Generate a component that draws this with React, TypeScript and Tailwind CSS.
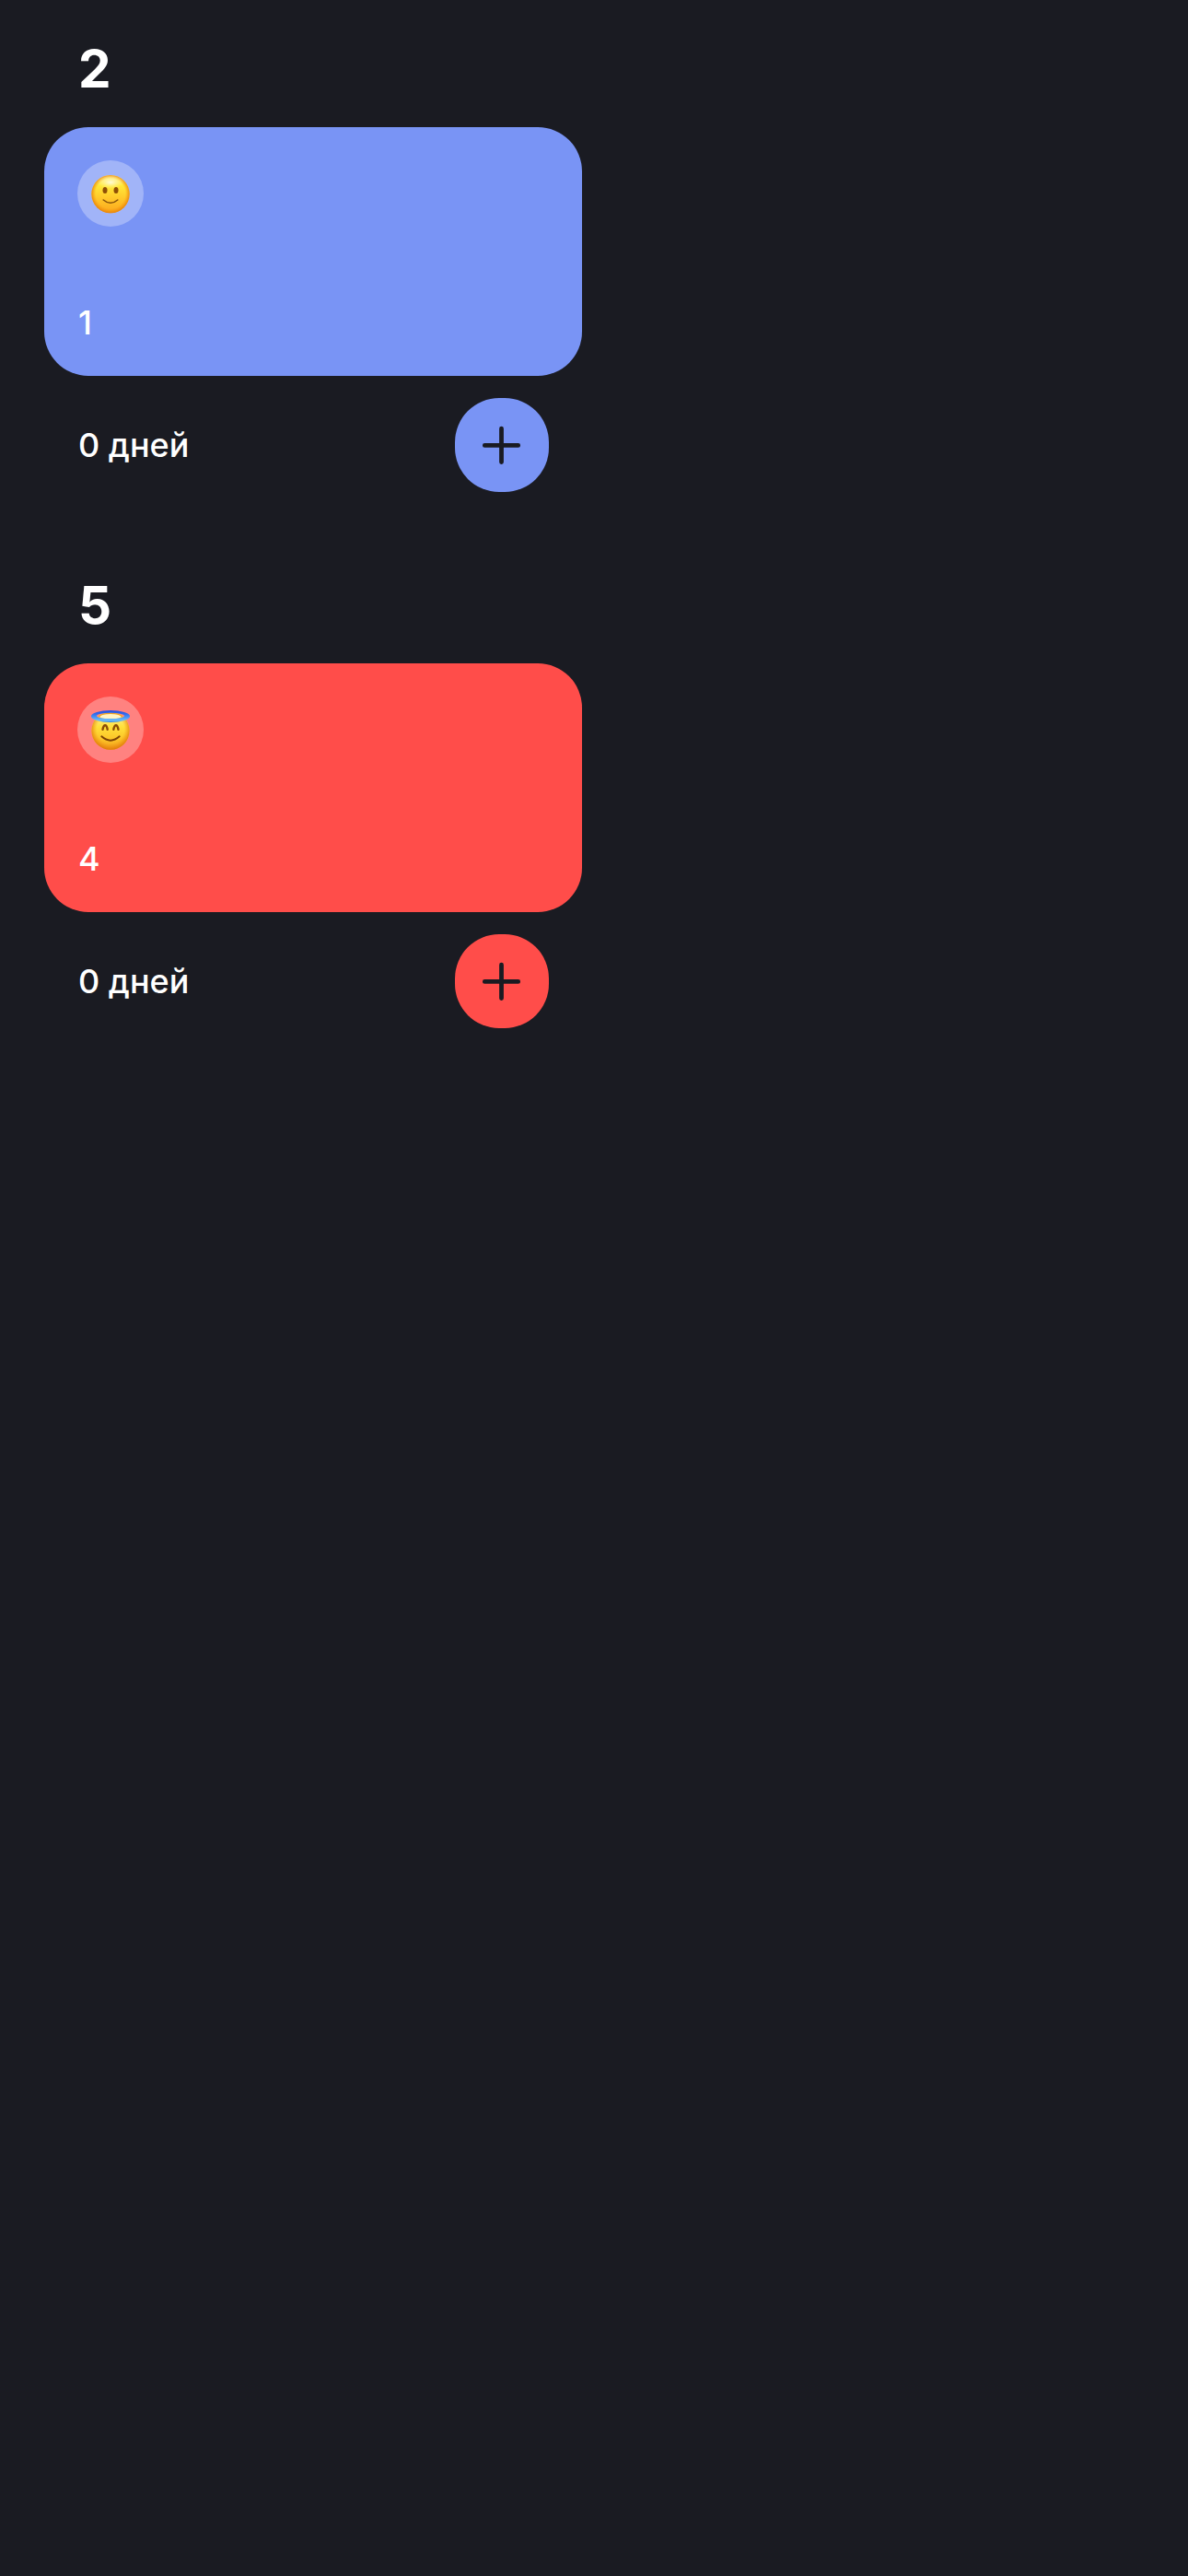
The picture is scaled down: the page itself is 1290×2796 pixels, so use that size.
function SmileFace() {
  return (
    <svg viewBox="0 0 80 80" className="size-full" aria-hidden="true">
      <defs>
        <linearGradient id="smile-base" x1="0" y1="0" x2="0" y2="1">
          <stop offset="0" stopColor="#fff3a6" />
          <stop offset="0.28" stopColor="#ffe838" />
          <stop offset="0.6" stopColor="#ffc92b" />
          <stop offset="1" stopColor="#fba61c" />
        </linearGradient>
        <radialGradient id="smile-edge" cx="0.5" cy="0.49" r="0.51">
          <stop offset="0.76" stopColor="#f59a10" stopOpacity="0" />
          <stop offset="1" stopColor="#e88208" stopOpacity="0.95" />
        </radialGradient>
        <radialGradient id="smile-shine" cx="0.5" cy="0.5" r="0.5">
          <stop offset="0" stopColor="#fffdf0" stopOpacity="0.85" />
          <stop offset="1" stopColor="#fff6a0" stopOpacity="0" />
        </radialGradient>
      </defs>
      <circle cx="40" cy="40.6" r="20.6" fill="url(#smile-base)" />
      <circle cx="40" cy="40.6" r="20.6" fill="url(#smile-edge)" />
      <ellipse cx="40" cy="28" rx="14" ry="7" fill="url(#smile-shine)" />
      <ellipse cx="34" cy="36.4" rx="2.5" ry="3.5" fill="#8e4f06" />
      <ellipse cx="46" cy="36.4" rx="2.5" ry="3.5" fill="#8e4f06" />
      <path d="M32.2 47 Q40 53.6 47.8 47" fill="none" stroke="#85510a" strokeWidth="1.5" strokeLinecap="round" />
    </svg>
  );
}

function HaloFace() {
  return (
    <svg viewBox="0 0 80 80" className="size-full" aria-hidden="true">
      <defs>
        <linearGradient id="halo-base" x1="0" y1="0" x2="0" y2="1">
          <stop offset="0" stopColor="#fff0a8" />
          <stop offset="0.4" stopColor="#ffe03a" />
          <stop offset="0.7" stopColor="#fcc629" />
          <stop offset="1" stopColor="#f3a01c" />
        </linearGradient>
        <radialGradient id="halo-edge" cx="0.5" cy="0.47" r="0.53">
          <stop offset="0.68" stopColor="#f09010" stopOpacity="0" />
          <stop offset="1" stopColor="#df7808" stopOpacity="0.9" />
        </radialGradient>
        <linearGradient id="halo-ring" x1="0" y1="0" x2="0" y2="1">
          <stop offset="0" stopColor="#2350e0" />
          <stop offset="0.22" stopColor="#2c62ea" />
          <stop offset="0.6" stopColor="#4a98f6" />
          <stop offset="0.85" stopColor="#6cc0fb" />
          <stop offset="1" stopColor="#2f7fe0" />
        </linearGradient>
      </defs>
      <circle cx="40" cy="41.1" r="20.6" fill="url(#halo-base)" />
      <circle cx="40" cy="41.1" r="20.6" fill="url(#halo-edge)" />
      <ellipse cx="40" cy="25.6" rx="11.5" ry="3" fill="#fff4c4" />
      <path d="M27.5 25.9 Q30 22.3 40 22.3 Q50 22.3 52.5 25.9" fill="none" stroke="#f5a322" strokeWidth="1.3" />
      <path
        fillRule="evenodd"
        fill="url(#halo-ring)"
        d="M18.9 25.5a21.1 6.4 0 1 0 42.2 0a21.1 6.4 0 1 0 -42.2 0zM25 24.9a15 3.2 0 1 1 30 0a15 3.2 0 1 1 -30 0z"
      />
      <path d="M31.5 39.8 Q32.3 35.2 34.1 35.2 Q36 35.2 36.7 39.8" fill="none" stroke="#8a4d06" strokeWidth="2.4" strokeLinecap="round" />
      <path d="M43.3 39.8 Q44.1 35.2 46 35.2 Q47.7 35.2 48.5 39.8" fill="none" stroke="#8a4d06" strokeWidth="2.4" strokeLinecap="round" />
      <path d="M30.3 47.3 Q40 56 49.7 47.3" fill="none" stroke="#7c4205" strokeWidth="1.9" strokeLinecap="round" />
    </svg>
  );
}

function PlusIcon() {
  return (
    <svg viewBox="0 0 102 102" className="size-full" aria-hidden="true">
      <path d="M50.5 33.2V69.6M32.3 51.4H68.7" fill="none" stroke="#1a1b22" strokeWidth="4.8" strokeLinecap="round" />
    </svg>
  );
}

type Tracker = { category: string; title: string; days: string; color: string; face: "smile" | "halo" };

const trackers: Tracker[] = [
  { category: "2", title: "1", days: "0 дней", color: "bg-[#7994f5]", face: "smile" },
  { category: "5", title: "4", days: "0 дней", color: "bg-[#ff4d4a]", face: "halo" },
];

function TrackerSection({ category, title, days, color, face }: Tracker) {
  return (
    <section className="flex h-[582px] w-[584px] flex-col">
      <h2 className="flex h-[138px] items-end pb-[29px] pl-[37px] text-[56.5px] leading-[69px] font-bold">{category}</h2>
      <div className={`flex h-[270px] flex-col justify-between rounded-[48px] px-9 pt-9 pb-[37px] ${color}`}>
        <div className="size-[72px] overflow-hidden rounded-full bg-white/30">
          <div className="-m-1 size-20">{face === "smile" ? <SmileFace /> : <HaloFace />}</div>
        </div>
        <p className="pl-px text-[36px] leading-[42px] font-[450]">{title}</p>
      </div>
      <div className="mt-6 flex h-[102px] items-center justify-between px-9">
        <span className="pl-px text-[36px] leading-[42px] font-[450]">{days}</span>
        <button className={`size-[102px] rounded-[48px] ${color}`} aria-label="+">
          <PlusIcon />
        </button>
      </div>
    </section>
  );
}

export default function App() {
  return (
    <main className="flex min-h-[2796px] w-[1290px] flex-col bg-[#1a1b22] pl-12 font-['Inter',sans-serif] text-white">
      {trackers.map((t) => (
        <TrackerSection key={t.category} {...t} />
      ))}
    </main>
  );
}
